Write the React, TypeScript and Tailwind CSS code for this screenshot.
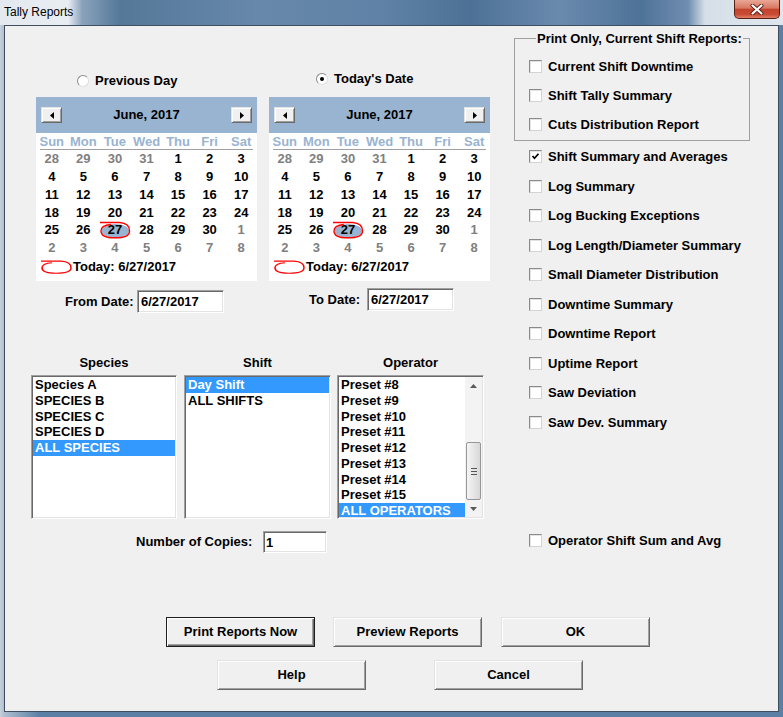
import React from "react";

const sunken =
  "border border-t-[#a0a0a0] border-l-[#a0a0a0] border-r-white border-b-white shadow-[inset_1px_1px_0_#696969,inset_-1px_-1px_0_#e3e3e3]";
const raised =
  "bg-[#f0f0f0] border border-t-[#e3e3e3] border-l-[#e3e3e3] border-r-[#696969] border-b-[#696969] shadow-[inset_1px_1px_0_#fff,inset_-1px_-1px_0_#a0a0a0]";
const raisedDefault =
  "bg-[#f0f0f0] border border-[#1e1e1e] shadow-[inset_1px_1px_0_#fff,inset_-1px_-1px_0_#696969,inset_-2px_-2px_0_#a0a0a0]";

const DAYS = [28, 29, 30, 31, ...Array.from({ length: 30 }, (_, i) => i + 1), 1, 2, 3, 4, 5, 6, 7, 8];
const WEEKDAYS = ["Sun", "Mon", "Tue", "Wed", "Thu", "Fri", "Sat"];

const REPORTS: [string, boolean][] = [
  ["Shift Summary and Averages", true],
  ["Log Summary", false],
  ["Log Bucking Exceptions", false],
  ["Log Length/Diameter Summary", false],
  ["Small Diameter Distribution", false],
  ["Downtime Summary", false],
  ["Downtime Report", false],
  ["Uptime Report", false],
  ["Saw Deviation", false],
  ["Saw Dev. Summary", false],
];

const Radio = ({ checked }: { checked?: boolean }) => (
  <span className="w-[12px] h-[12px] rounded-full border border-t-[#8c8c8c] border-l-[#8c8c8c] border-r-[#e0e0e0] border-b-[#e0e0e0] bg-white flex items-center justify-center">
    {checked && <span className="w-[4px] h-[4px] rounded-full bg-black" />}
  </span>
);

const CheckBox = ({ checked }: { checked?: boolean }) => (
  <span className="w-[13px] h-[13px] shrink-0 border border-t-[#8a8a8a] border-l-[#8a8a8a] border-r-[#d4d4d4] border-b-[#d4d4d4] bg-white shadow-[inset_1px_1px_0_#e4e4e4] flex items-center justify-center">
    {checked && (
      <svg width="9" height="9" viewBox="0 0 9 9">
        <path d="M1.5 4 L3.5 6.2 L7.5 1.8" stroke="#000" strokeWidth="1.7" fill="none" />
      </svg>
    )}
  </span>
);

// red hand drawn loop used by the month calendar for "today"
const LOOP = "M1 1.5 L21 1.5 C27 2 31 5 31 10 C31 14.5 25 17 16 17 C7 17 2 14.5 2 10 C2 6.5 6 4 12 3.5";

const NavButton = ({ dir }: { dir: "left" | "right" }) => (
  <div className={`w-[21px] h-[16px] flex items-center justify-center ${raised}`}>
    <svg width="4" height="7" viewBox="0 0 4 7">
      <path d={dir === "left" ? "M4 0 L0 3.5 L4 7Z" : "M0 0 L4 3.5 L0 7Z"} fill="#000" />
    </svg>
  </div>
);

function Calendar() {
  return (
    <div className="w-[221px] h-[184px] bg-white flex flex-col">
      <div className="h-[36px] bg-[#99b4d1] flex items-center justify-between px-[5px]">
        <NavButton dir="left" />
        <span className="font-bold text-[13px]">June, 2017</span>
        <NavButton dir="right" />
      </div>
      <div className="grid grid-cols-7 mt-[1px] h-[15px] leading-[15px] text-[13px] font-bold text-[#99b4d1]">
        {WEEKDAYS.map((d) => (
          <span key={d} className="text-center">
            {d}
          </span>
        ))}
      </div>
      <div className="mx-[4px] h-px bg-[#a0a0a0]" />
      <div className="grid grid-cols-7">
        {DAYS.map((d, i) => {
          const grey = i < 4 || i >= 34;
          const sel = i === 30;
          return (
            <div
              key={i}
              className={`relative h-[17.8px] flex items-center justify-center text-[13px] font-bold ${
                grey ? "text-[#808080]" : "text-black"
              }`}
            >
              {sel && (
                <svg className="absolute left-0 top-0 w-full h-full" viewBox="0 0 32 18" preserveAspectRatio="none">
                  <ellipse cx="16.5" cy="10" rx="14" ry="7" fill="#99b4d1" />
                  <path d={LOOP} stroke="#ff0000" strokeWidth="1.4" fill="none" />
                </svg>
              )}
              <span className="relative">{d}</span>
            </div>
          );
        })}
      </div>
      <div className="h-[20px] flex items-center pl-[4px] text-[13px] font-bold">
        <svg width="32" height="14" viewBox="0 0 32 18" preserveAspectRatio="none">
          <path d={LOOP} stroke="#ff0000" strokeWidth="1.5" fill="none" />
        </svg>
        <span className="ml-[1px]">Today: 6/27/2017</span>
      </div>
    </div>
  );
}

function ListBox({ items, selected, scroll }: { items: string[]; selected: number; scroll?: boolean }) {
  return (
    <div className={`w-full h-[144px] bg-white flex p-[1px] ${sunken}`}>
      <div className="flex-1 overflow-hidden">
        {items.map((it, i) => (
          <div
            key={it}
            className={`h-[15.75px] leading-[15.75px] pl-[2px] text-[13px] font-bold whitespace-nowrap ${
              i === selected ? "bg-[#3399ff] text-white" : "text-black"
            }`}
          >
            {it}
          </div>
        ))}
      </div>
      {scroll && (
        <div className="w-[17px] flex flex-col bg-[#f3f3f3]">
          <div className="h-[17px] flex items-center justify-center">
            <svg width="7" height="4" viewBox="0 0 7 4">
              <path d="M0 4 L3.5 0 L7 4Z" fill="#5a5a5a" />
            </svg>
          </div>
          <div className="flex-1 flex flex-col justify-end px-[1px]">
            <div className="h-[58px] rounded-[2px] border border-[#979797] bg-[linear-gradient(90deg,#f5f5f5,#e6e6e6_50%,#d8d8d8)] flex flex-col items-center justify-center gap-[2px]">
              <span className="w-[6px] h-px bg-[#555]" />
              <span className="w-[6px] h-px bg-[#555]" />
              <span className="w-[6px] h-px bg-[#555]" />
            </div>
          </div>
          <div className="h-[17px] flex items-center justify-center">
            <svg width="7" height="4" viewBox="0 0 7 4">
              <path d="M0 0 L3.5 4 L7 0Z" fill="#5a5a5a" />
            </svg>
          </div>
        </div>
      )}
    </div>
  );
}

const Button = ({ children, def, className = "" }: { children: React.ReactNode; def?: boolean; className?: string }) => (
  <button
    className={`w-[149px] h-[30px] text-[13px] font-bold text-black ${def ? raisedDefault : raised} ${className}`}
  >
    {children}
  </button>
);

function TitleBar() {
  return (
    <div className="h-[25px] flex items-start bg-[linear-gradient(90deg,#e3e9ef_0px,#e8edf2_68px,#8aa3bc_82px,#557899_120px,#6788aa_260px,#5f82a6_380px,#4d7196_470px,#6a8aad_560px,#4e7398_640px,#6f8db0_688px,#d6dfe8_705px,#dfe6ed_783px)]">
      <span className="ml-[4px] mt-[5px] text-[12px] leading-[14px] text-black">Tally Reports</span>
      <div className="ml-auto mr-[3px] w-[46px] h-[19px] rounded-b-[5px] border border-t-0 border-[#5a1e15] bg-[linear-gradient(180deg,#e9a797_0%,#d87862_45%,#c4452d_52%,#c94b33_80%,#df8068_100%)] flex items-center justify-center">
        <svg width="14" height="11" viewBox="0 0 14 11">
          <path d="M2.5 1.5 L11.5 9.5 M11.5 1.5 L2.5 9.5" stroke="#5a1e15" strokeWidth="4" strokeLinecap="round" />
          <path d="M2.5 1.5 L11.5 9.5 M11.5 1.5 L2.5 9.5" stroke="#fff" strokeWidth="2.2" strokeLinecap="round" />
        </svg>
      </div>
    </div>
  );
}

export default function App() {
  return (
    <div className="w-[783px] h-[717px] flex flex-col font-['Liberation_Sans',Arial,sans-serif] text-black bg-[linear-gradient(90deg,#c6d1dc_0px,#aebfd0_4px,#5b7fa5_40px,#5b7fa5_100%)]">
      <TitleBar />
      <div className="mx-[4px] mb-[5px] flex-1 border border-[#3f4f60] bg-[#f0f0f0] flex flex-col">
        <div className="flex h-[530px]">
          {/* left: dates and lists */}
          <div className="w-[509px] pl-[26px] flex flex-col">
            <div className="flex ml-[5px] mt-[46px] h-[16px] text-[13px] font-bold">
              <div className="w-[233px] pl-[41px] flex items-center gap-[6px] mt-[2px]">
                <Radio />
                <span>Previous Day</span>
              </div>
              <div className="pl-[47px] flex items-center gap-[6px] -mt-[2px]">
                <Radio checked />
                <span>Today's Date</span>
              </div>
            </div>

            <div className="flex ml-[5px] mt-[9px] gap-[12px]">
              <Calendar />
              <Calendar />
            </div>

            <div className="flex ml-[5px] mt-[9px] h-[23px] text-[13px] font-bold">
              <div className="w-[233px] pl-[29px] flex items-center">
                <span className="w-[72px]">From Date:</span>
                <input readOnly value="6/27/2017" className={`w-[87px] h-[23px] bg-white px-[3px] outline-none ${sunken}`} />
              </div>
              <div className="pl-[40px] flex items-center -mt-[4px]">
                <span className="w-[58px]">To Date:</span>
                <input readOnly value="6/27/2017" className={`w-[87px] h-[23px] bg-white px-[3px] outline-none ${sunken}`} />
              </div>
            </div>

            <div className="flex mt-[42px] text-[13px] font-bold">
              <div className="w-[146px] flex flex-col items-center">
                <span className="h-[15px] leading-[15px]">Species</span>
                <div className="mt-[5px] w-full">
                  <ListBox items={["Species A", "SPECIES B", "SPECIES C", "SPECIES D", "ALL SPECIES"]} selected={4} />
                </div>
              </div>
              <div className="w-[147px] ml-[7px] flex flex-col items-center">
                <span className="h-[15px] leading-[15px]">Shift</span>
                <div className="mt-[5px] w-full">
                  <ListBox items={["Day Shift", "ALL SHIFTS"]} selected={0} />
                </div>
              </div>
              <div className="w-[147px] ml-[6px] flex flex-col items-center">
                <span className="h-[15px] leading-[15px]">Operator</span>
                <div className="mt-[5px] w-full">
                  <ListBox
                    items={[
                      "Preset #8",
                      "Preset #9",
                      "Preset #10",
                      "Preset #11",
                      "Preset #12",
                      "Preset #13",
                      "Preset #14",
                      "Preset #15",
                      "ALL OPERATORS",
                    ]}
                    selected={8}
                    scroll
                  />
                </div>
              </div>
            </div>

            <div className="flex items-center mt-[12px] h-[22px] ml-[105px] text-[13px] font-bold">
              <span className="w-[127px]">Number of Copies:</span>
              <input readOnly value="1" className={`w-[64px] h-[22px] bg-white px-[2px] outline-none ${sunken}`} />
            </div>
          </div>

          {/* right: report checkboxes */}
          <div className="flex-1 pt-[5px] flex flex-col text-[13px] font-bold">
            <fieldset className="w-[236px] border border-[#a0a0a0] pl-[14px] pt-[6px] pb-[1px]">
              <legend className="ml-[7px] px-[1px] leading-[15px]">Print Only, Current Shift Reports:</legend>
              {["Current Shift Downtime", "Shift Tally Summary", "Cuts Distribution Report"].map((r) => (
                <div key={r} className="h-[29px] flex items-center gap-[6px]">
                  <CheckBox />
                  <span>{r}</span>
                </div>
              ))}
            </fieldset>
            <div className="mt-[1px] pl-[15px]">
              {REPORTS.map(([r, c]) => (
                <div key={r} className="h-[29.5px] flex items-center gap-[6px]">
                  <CheckBox checked={c} />
                  <span>{r}</span>
                </div>
              ))}
              <div className="mt-[89px] h-[29.5px] flex items-center gap-[6px]">
                <CheckBox />
                <span>Operator Shift Sum and Avg</span>
              </div>
            </div>
          </div>
        </div>

        <div className="mt-[61px] flex pl-[161px]">
          <Button def>Print Reports Now</Button>
          <Button className="ml-[18px]">Preview Reports</Button>
          <Button className="ml-[19px]">OK</Button>
        </div>
        <div className="mt-[13px] flex pl-[212px]">
          <Button>Help</Button>
          <Button className="ml-[68px]">Cancel</Button>
        </div>
      </div>
    </div>
  );
}
